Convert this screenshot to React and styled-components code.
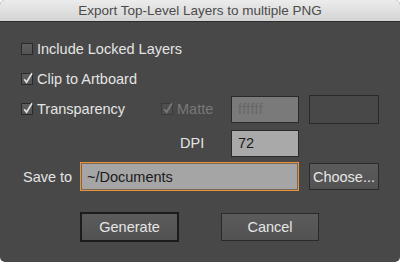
import React from 'react';
import styled, { createGlobalStyle } from 'styled-components';

const GlobalStyle = createGlobalStyle`
  html, body {
    margin: 0;
    padding: 0;
    background: #ffffff;
  }
  body {
    font-family: "Liberation Sans", Arial, sans-serif;
    font-size: 14px;
  }
`;

const Window = styled.div`
  width: 400px;
  height: 262px;
  background: #484848;
  border-radius: 5px;
  overflow: hidden;
  display: flex;
  flex-direction: column;
`;

const TitleBar = styled.div`
  height: 21px;
  flex: none;
  background: linear-gradient(#ececec, #d4d4d4);
  border-bottom: 1px solid #2c2c2c;
  color: #4b4b4b;
  font-size: 13.5px;
  display: flex;
  align-items: center;
  justify-content: center;
`;

const Body = styled.div`
  padding: 12px 21px 0 21px;
  display: flex;
  flex-direction: column;
`;

const Row = styled.div`
  display: flex;
  align-items: center;
  height: ${(p) => p.$h || 30}px;
  margin-top: ${(p) => p.$mt || 0}px;
  padding-left: ${(p) => p.$pl || 0}px;
`;

const CheckLabel = styled.label`
  display: flex;
  align-items: center;
  width: ${(p) => (p.$w ? `${p.$w}px` : 'auto')};
  color: ${(p) => (p.$disabled ? '#787878' : '#e4e4e4')};
  font-size: 14.5px;
  flex: none;
`;

const Box = styled.span`
  width: 12px;
  height: 12px;
  box-sizing: border-box;
  border: 1px solid ${(p) => (p.$disabled ? '#3a3a3a' : '#2a2a2a')};
  background: ${(p) => (p.$disabled ? '#4e4e4e' : 'linear-gradient(#5e5e5e, #545454)')};
  margin-right: 4px;
  position: relative;
  flex: none;
  svg {
    position: absolute;
    left: 0px;
    top: -3px;
  }
`;

const Text = styled.span`
  color: #e4e4e4;
  font-size: 14.5px;
  flex: none;
  width: ${(p) => (p.$w ? `${p.$w}px` : 'auto')};
`;

const Field = styled.div`
  box-sizing: border-box;
  width: ${(p) => p.$w}px;
  height: ${(p) => p.$h || 27}px;
  flex: none;
  border: 1px solid ${(p) => (p.$focus ? '#e8923c' : '#2a2a2a')};
  box-shadow: ${(p) => (p.$focus ? 'inset 0 0 0 1px #7a6a55' : 'none')};
  background: ${(p) => p.$bg};
  color: ${(p) => p.$fg || '#1b1b1b'};
  font-size: ${(p) => p.$fs || 14.5}px;
  letter-spacing: ${(p) => p.$ls || 0}px;
  display: flex;
  align-items: center;
  padding-left: 6px;
  margin-left: ${(p) => p.$ml || 0}px;
`;

const Button = styled.button`
  box-sizing: border-box;
  width: ${(p) => p.$w}px;
  height: ${(p) => p.$h}px;
  margin-left: ${(p) => p.$ml || 0}px;
  flex: none;
  padding: 0;
  border: ${(p) => (p.$default ? '2px solid #1c1c1c' : '1px solid #2a2a2a')};
  background: linear-gradient(#5b5b5b, #525252);
  color: #e6e6e6;
  font-family: "Liberation Sans", Arial, sans-serif;
  font-size: 14.5px;
`;

const Check = ({ color }) => (
  <svg width="12" height="14" viewBox="0 0 12 14">
    <path d="M2.2 8.2 L4.6 11.2 L10 2.2" fill="none" stroke={color} strokeWidth="1.7" />
  </svg>
);

const CheckBox = ({ checked, disabled, children, w }) => (
  <CheckLabel $disabled={disabled} $w={w}>
    <Box $disabled={disabled}>{checked && <Check color={disabled ? '#7a7a7a' : '#e0e0e0'} />}</Box>
    {children}
  </CheckLabel>
);

export default function App() {
  return (
    <>
      <GlobalStyle />
      <Window>
        <TitleBar>Export Top-Level Layers to multiple PNG</TitleBar>
        <Body>
          <Row>
            <CheckBox>Include Locked Layers</CheckBox>
          </Row>
          <Row>
            <CheckBox checked>Clip to Artboard</CheckBox>
          </Row>
          <Row>
            <CheckBox checked w={140}>Transparency</CheckBox>
            <CheckBox checked disabled w={70}>Matte</CheckBox>
            <Field $w={68} $bg="#7a7a7a" $fg="#676767" $fs={14} $ls={0.5}>ffffff</Field>
            <Field $w={70} $h={29} $bg="#484848" $ml={10} />
          </Row>
          <Row $h={28} $mt={5} $pl={159}>
            <Text $w={51}>DPI</Text>
            <Field $w={68} $bg="#a9a9a9">72</Field>
          </Row>
          <Row $h={29} $mt={5} $pl={2}>
            <Text $w={57}>Save to</Text>
            <Field $w={219} $h={29} $bg="#a5a5a5" $focus>~/Documents</Field>
            <Button $w={70} $h={27} $ml={10}>Choose...</Button>
          </Row>
          <Row $h={30} $mt={21} $pl={59}>
            <Button $w={99} $h={30} $default>Generate</Button>
            <Button $w={98} $h={28} $ml={42}>Cancel</Button>
          </Row>
        </Body>
      </Window>
    </>
  );
}
